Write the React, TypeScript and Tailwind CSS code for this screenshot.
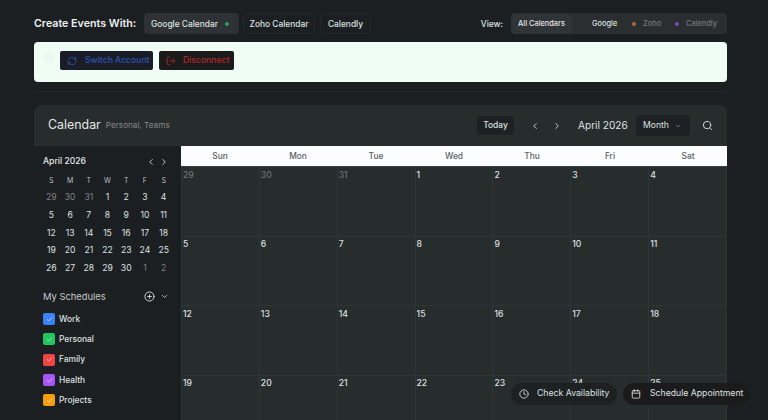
import { RefreshCw, LogOut, ChevronLeft, ChevronRight, ChevronDown, Search, CirclePlus, Check, Clock, Calendar, CircleCheck } from "lucide-react";

const mini = [
  [29, 30, 31, 1, 2, 3, 4],
  [5, 6, 7, 8, 9, 10, 11],
  [12, 13, 14, 15, 16, 17, 18],
  [19, 20, 21, 22, 23, 24, 25],
  [26, 27, 28, 29, 30, 1, 2],
];
const schedules = [
  ["Work", "bg-[#3b82f6]"],
  ["Personal", "bg-[#22c55e]"],
  ["Family", "bg-[#ef4444]"],
  ["Health", "bg-[#a855f7]"],
  ["Projects", "bg-[#f59e0b]"],
];
const days = ["Sun", "Mon", "Tue", "Wed", "Thu", "Fri", "Sat"];

export default function App() {
  return (
    <div className="relative h-[420px] w-[768px] overflow-hidden bg-[#1b1f21] text-white" style={{ fontFamily: '"Inter", "Liberation Sans", sans-serif' }}>
      <div className="pl-[34px] pr-[41px] pt-[13px]">
        <div className="flex h-[21px] items-center justify-between">
          <div className="flex items-center">
            <span className="w-[110px] pt-[2px] text-[10.7px] font-semibold text-[#eef0f0]">Create Events With:</span>
            <div className="flex h-[21px] w-[95px] items-center rounded bg-[#2f3234] pl-[7px] pt-px text-[8.4px] font-medium text-[#dfe1e2]">
              <span className="w-[67px]">Google Calendar</span><span className="ml-[7px] h-[4px] w-[4px] rounded-full bg-[#22a35a]" />
            </div>
            <div className="ml-[4px] flex h-[21px] w-[72px] items-center justify-center rounded border border-[#23272a] pt-px text-[8.4px] font-medium text-[#dfe1e2]">Zoho Calendar</div>
            <div className="ml-[5px] flex h-[21px] w-[51px] items-center justify-center rounded border border-[#23272a] pt-px text-[8.4px] font-medium text-[#dfe1e2]">Calendly</div>
          </div>
          <div className="flex items-center">
            <span className="mr-[8px] pt-px text-[8.4px] font-medium text-[#dfe1e2]">View:</span>
            <div className="flex h-[21px] w-[216px] items-center rounded bg-[#2a2e30] pt-px text-[7.4px] font-medium">
              <div className="flex h-full w-[61px] items-center justify-center rounded bg-[#303436] text-[#e6e8e8]">All Calendars</div>
              <span className="ml-[20px] w-[25px] text-[#dfe1e2]">Google</span>
              <span className="ml-[15px] h-[4px] w-[4px] rounded-full bg-[#b0683a]" />
              <span className="ml-[7px] w-[17px] text-[#76797b]">Zoho</span>
              <span className="ml-[15px] h-[4px] w-[4px] rounded-full bg-[#7a4bb5]" />
              <span className="ml-[7px] text-[#76797b]">Calendly</span>
            </div>
          </div>
        </div>

        <div className="mt-[8px] flex h-[40px] items-start rounded bg-[#f0fdf4] pl-[10px] pt-[9px]">
          <CircleCheck className="mt-[1px] text-[#dcebe2]" size={10} />
          <button className="ml-[6px] flex h-[19px] w-[93px] shrink-0 items-center whitespace-nowrap rounded-[2px] bg-[#1a1d27] pl-[7px] text-[8.6px] font-medium text-[#2f54b0]">
            <RefreshCw size={10} className="text-[#2f54b0]" />
            <span className="ml-[8px]">Switch Account</span>
          </button>
          <button className="ml-[6px] flex h-[19px] w-[75px] shrink-0 items-center whitespace-nowrap rounded-[2px] bg-[#1c1b1c] pl-[7px] text-[8.6px] font-medium text-[#b02a2a]">
            <LogOut size={10} className="text-[#b02a2a]" />
            <span className="ml-[7px]">Disconnect</span>
          </button>
        </div>

        <div className="mt-[9px] h-px bg-[#24282a]" />

        <div className="mt-[13px] rounded-t-lg bg-[#272c2d]">
          <div className="flex h-[41px] items-center pl-[14px] pr-[14px]">
            <span className="text-[12.4px] text-[#e6e8e8]">Calendar</span>
            <span className="ml-[5px] text-[8.2px] text-[#85898a]">Personal, Teams</span>
            <div className="ml-auto flex h-[19px] w-[37px] items-center justify-center rounded bg-[#1d2123] text-[8.4px] font-medium text-[#dfe1e2]">Today</div>
            <ChevronLeft size={10} className="ml-[16px] text-[#dfe1e2]" />
            <ChevronRight size={10} className="ml-[12px] text-[#dfe1e2]" />
            <span className="ml-[16px] w-[49px] whitespace-nowrap text-[10.1px] text-[#dfe1e2]">April 2026</span>
            <div className="ml-[9px] flex h-[21px] w-[54px] items-center justify-between rounded bg-[#1d2123] pl-[7px] pr-[8px] text-[8.6px] text-[#dfe1e2]">
              Month<ChevronDown size={8} className="text-[#85898a]" />
            </div>
            <Search size={11} className="ml-[12px] text-[#dfe1e2]" />
          </div>

          <div className="flex">
            <aside className="h-[274px] w-[147px] shrink-0 bg-[#1b1f21] pl-[9px] pr-[8px]">
              <div className="flex h-[31px] items-center pr-[4px]">
                <span className="text-[8.6px] font-medium text-[#e6e8e8]">April 2026</span>
                <ChevronLeft size={10} className="ml-auto text-[#dfe1e2]" />
                <ChevronRight size={10} className="ml-[3px] text-[#dfe1e2]" />
              </div>
              <div className="-ml-[1px] -mt-[3px] grid grid-cols-7 text-center text-[7px] text-[#bcbfc0]">
                {["S", "M", "T", "W", "T", "F", "S"].map((d, i) => <span key={i} className="h-[13px] leading-[13px]">{d}</span>)}
              </div>
              <div className="-ml-[1px] mt-[2px] grid grid-cols-7 text-center text-[8.6px]">
                {mini.flat().map((d, i) => (
                  <span key={i} className={`h-[17.8px] leading-[17.8px] ${i < 3 || i > 32 ? "text-[#7d8183]" : "text-[#dfe1e2]"}`}>{d}</span>
                ))}
              </div>
              <div className="mt-[11px] flex h-[16px] items-center pr-[4px]">
                <span className="text-[9.4px] text-[#c6c9ca]">My Schedules</span>
                <CirclePlus size={11} className="ml-auto text-[#dfe1e2]" />
                <ChevronDown size={9} className="ml-[5px] text-[#dfe1e2]" />
              </div>
              <div className="mt-[4px]">
                {schedules.map(([n, c]) => (
                  <div key={n} className="flex h-[20.3px] items-center">
                    <span className={`flex h-[12px] w-[12px] items-center justify-center rounded-[2px] ${c}`}><Check size={7} className="text-white" /></span>
                    <span className="ml-[4px] text-[8.4px] font-medium text-[#dfe1e2]">{n}</span>
                  </div>
                ))}
              </div>
            </aside>
            <div className="min-w-0 flex-1">
              <div className="grid h-[21px] grid-cols-7 border-b border-[#3a3d3f] bg-[#fbfcfd] text-center text-[8.4px] font-medium leading-[20px] text-[#5c6063]">
                {days.map((d) => <span key={d}>{d}</span>)}
              </div>
              <div className="grid grid-cols-7 border-l border-[#2f3435]">
                {mini.flat().slice(0, 28).map((d, i) => (
                  <div key={i} className={`h-[69.5px] border-b border-r border-[#2f3435] pl-[1px] pt-[1.5px] text-[8.6px] font-medium ${i < 3 ? "text-[#6f7375]" : "text-[#dfe1e2]"}`}>{d}</div>
                ))}
              </div>
            </div>
          </div>
        </div>
      </div>

      <div className="absolute bottom-[15px] left-[511px] flex h-[22px] w-[106px] items-center whitespace-nowrap rounded-full bg-[#1d2122] pl-[8px] text-[8.7px] text-[#dfe1e2]">
        <Clock size={10} /><span className="ml-[8px]">Check Availability</span>
      </div>
      <div className="absolute bottom-[15px] left-[623px] flex h-[22px] w-[126px] items-center whitespace-nowrap rounded-full bg-[#1c1b1c] pl-[8px] text-[8.7px] text-[#dfe1e2]">
        <Calendar size={10} /><span className="ml-[9px]">Schedule Appointment</span>
      </div>
    </div>
  );
}
